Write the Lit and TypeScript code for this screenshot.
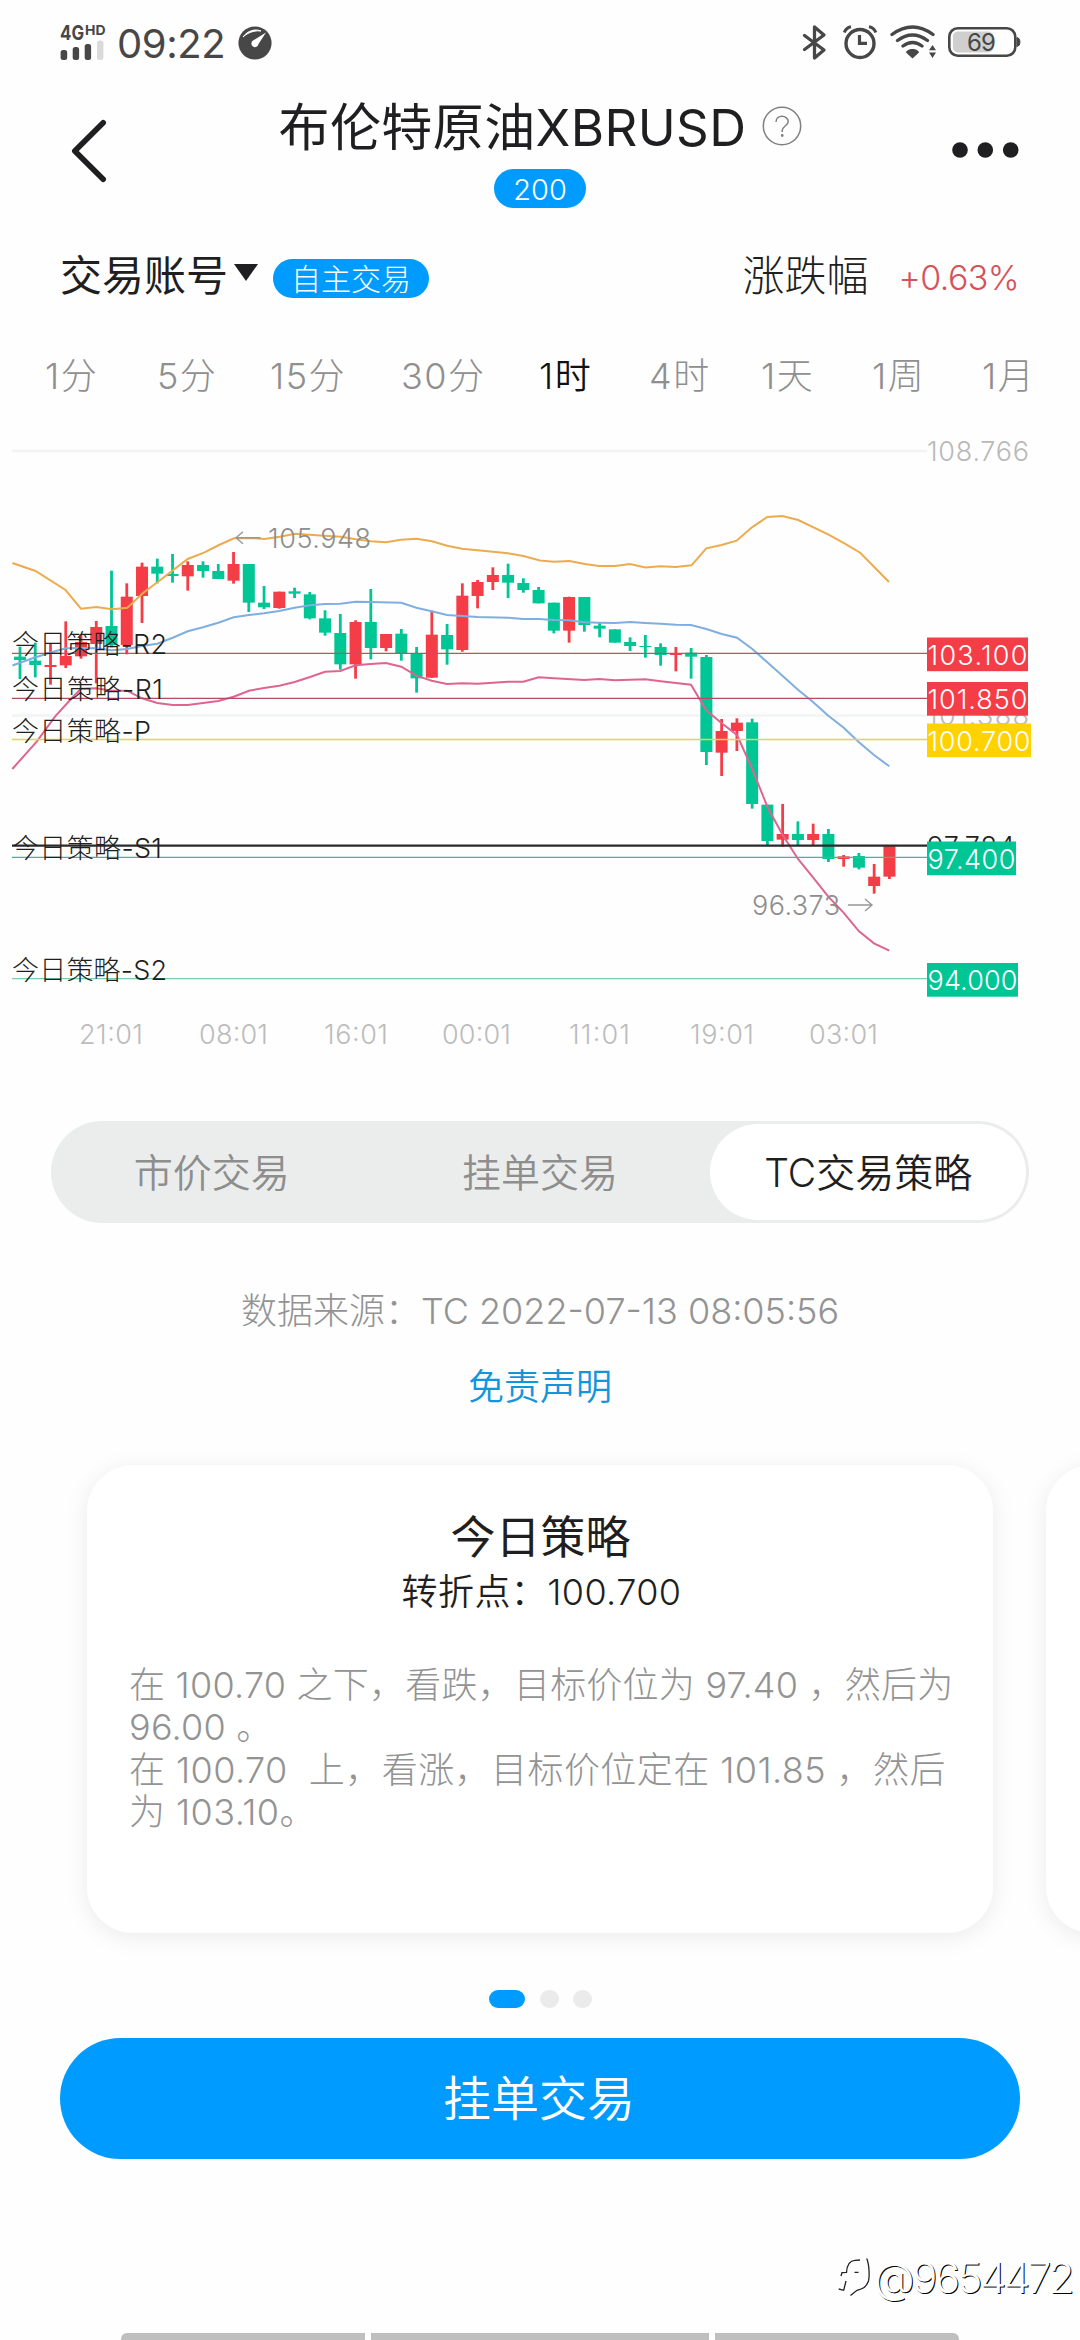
import { LitElement, html, svg, css } from "lit";
import { customElement, state } from "lit/decorators.js";
import { classMap } from "lit/directives/class-map.js";

const UP = "#f53d47";
const DOWN = "#00c696";

/* colour, wick top, wick bottom, body top, body bottom; in thirds of a pixel below y=540 */
type Candle = [string, number, number, number, number];
const candles: Candle[] = [
  [DOWN, 320, 417, 350, 360], [DOWN, 308, 412, 362, 375], [UP, 312, 434, 375, 381],
  [UP, 244, 384, 348, 376], [UP, 285, 356, 306, 349], [UP, 243, 430, 261, 312],
  [DOWN, 92, 322, 258, 316], [UP, 130, 343, 170, 315], [UP, 68, 249, 80, 168],
  [DOWN, 56, 130, 80, 101], [DOWN, 42, 128, 102, 108], [UP, 64, 152, 75, 109],
  [DOWN, 64, 113, 75, 93], [DOWN, 72, 117, 93, 117], [UP, 36, 131, 72, 122],
  [DOWN, 72, 216, 72, 188], [DOWN, 138, 207, 188, 202], [UP, 155, 206, 155, 204],
  [DOWN, 143, 174, 154, 161], [DOWN, 156, 238, 163, 235], [DOWN, 211, 287, 235, 278],
  [DOWN, 222, 389, 279, 373], [UP, 241, 416, 246, 373], [DOWN, 147, 358, 246, 324],
  [UP, 282, 334, 282, 324], [DOWN, 267, 362, 281, 339], [DOWN, 321, 458, 341, 415],
  [UP, 212, 414, 284, 413], [DOWN, 252, 374, 285, 328], [UP, 130, 335, 167, 330],
  [UP, 120, 205, 126, 168], [UP, 82, 150, 105, 126], [DOWN, 71, 174, 105, 128],
  [DOWN, 115, 158, 129, 150], [DOWN, 141, 190, 150, 190], [DOWN, 188, 280, 188, 272],
  [UP, 170, 308, 171, 272], [DOWN, 171, 275, 171, 255], [DOWN, 248, 292, 257, 266],
  [DOWN, 268, 308, 268, 308], [DOWN, 292, 333, 306, 318], [DOWN, 285, 353, 318, 321],
  [DOWN, 310, 377, 321, 345], [UP, 321, 394, 341, 345], [DOWN, 324, 416, 338, 350],
  [DOWN, 345, 675, 351, 636], [UP, 537, 708, 573, 638], [UP, 535, 633, 548, 573],
  [DOWN, 536, 806, 547, 792], [DOWN, 794, 917, 794, 903], [UP, 792, 920, 882, 899],
  [DOWN, 844, 917, 882, 900], [UP, 851, 917, 882, 900], [DOWN, 867, 966, 882, 957],
  [UP, 945, 980, 949, 957], [DOWN, 939, 988, 948, 983], [UP, 972, 1061, 1010, 1038],
  [UP, 917, 1017, 917, 1010],
];

const upperBand =
  "12.4,563 35.5,571 65.5,590 81,608.7 96.4,607 112,609.3 127.4,607.7 143,593 157.7,582 187.7,559 204,552.7 219,545 234,538.3 249,538 264.5,539 279.6,536.7 295.5,533.7 323.7,535.7 341,536.7 355.7,539.3 371,541.3 386,542.3 401,539.7 416.7,538.7 432,541.3 447,545.7 462,548.7 493,551.7 508,553.3 523.4,556 540,560.5 553.8,561.7 569.6,561 584.8,564 599,566 615,566 630,564 645.4,567.5 660.5,566.3 675.7,567 691.5,565.3 706.3,548.3 721.5,545 736.6,540.7 752,527.3 767.3,517 782.4,516 798.3,520 828.6,534.7 844.4,543.3 860.2,552.7 889,582";
const middleBand =
  "12.4,665.5 33.3,658 50,652.7 65.7,648.3 81,648 96.4,648.3 111.7,650.3 127,649 142,646 157.3,643.7 172.7,637.7 187.7,631.3 203,627.3 218.3,622.7 233.7,617.3 249,615 264,613.3 279.3,611 294.6,607.7 310,605.3 325,604 340.3,603.7 355.7,601.7 370.7,602 401.3,602.7 416.3,607.7 431.7,611.3 447,615 462.3,616 477.7,617 508,617.7 523.3,619 538.7,619 554,620 569,620.3 584.3,622.3 599.3,622.7 615,623 630.3,622 645.3,623 660.7,623.7 676,624.7 691,625 706.3,629 721.7,634 737,637.7 752,648.7 767.3,662.3 782.7,676 798,689.7 813,702 828.3,715.7 843.7,727.7 859,742.3 874,755 889.3,766.3";
const lowerBand =
  "12.3,769 36.7,741.7 55,716.7 71.7,698.3 81,688.7 96.3,688.3 111.7,690.7 127,690.7 142,698.3 157.3,703 172.7,705 187.7,705 203,703 218.3,701 233.7,696.7 249,690.7 264,688 279.3,685.7 294.7,682 310,677 325,671.7 340.3,671 355.7,665.3 370.7,664 386,663 401.3,666.7 416.3,675.7 431.7,680.7 447,684 462.3,683.3 477.7,683.7 493,682.7 508,681.7 523.3,681.7 538.7,677.3 554,678.3 584.3,680 599.3,679 615,680.3 645.3,679.3 660.7,681.3 676,683 691,684.7 706.3,710.3 721.7,723.3 737,735 752,768.3 767.3,806.7 782.7,835 798,859 813,877.3 828.3,896.7 843.3,912.3 859,931.3 874,943.3 889.3,950.7";

/* y, line colour, label, label width, price, tag top, tag width, tag fill */
const levels: [number, string, string, number, string, number, number, string][] = [
  [653.3, "#b05a5e", "今日策略-R2", 153, "103.100", 637.5, 101, UP],
  [698.3, "#b84a60", "今日策略-R1", 149, "101.850", 682, 101, UP],
  [739.5, "#dfd84a", "今日策略-P", 137, "100.700", 723.5, 104, "#ffd200"],
  [857.3, "#4fae9c", "今日策略-S1", 148, "97.400", 841.5, 89, DOWN],
  [978.7, "#7accb2", "今日策略-S2", 153, "94.000", 963, 91, DOWN],
];

const timeAxis: [string, number, number][] = [
  ["21:01", 79, 64], ["08:01", 199, 69], ["16:01", 324, 64], ["00:01", 442, 69],
  ["11:01", 569, 61], ["19:01", 690, 64], ["03:01", 809, 69],
];

@customElement("price-chart")
class PriceChart extends LitElement {
  static styles = css`
    :host { display: block; height: 650px; }
    svg { display: block; font-family: Inter, "Noto Sans CJK SC", sans-serif; font-weight: 300; font-size: 27px; }
  `;
  private y(v: number) { return 540 + v / 3; }
  render() {
    return html`<svg width="1080" height="650" viewBox="0 420 1080 650" fill="none">
      <path d="M12 451H927M12 715.5H927" stroke="#f2f3f3" stroke-width="2.4" />
      <text x="927" y="461" textLength="102" fill="#b9b9b9">108.766</text>
      <text x="927" y="725" textLength="102" fill="#b9b9b9">101.388</text>
      ${candles.map(([c, wt, wb, bt, bb], i) => {
        const x = 20 + i * 15.253;
        return svg`<rect x=${x - 1.4} y=${this.y(wt)} width="2.8" height=${(wb - wt) / 3} fill=${c} />
          <rect x=${x - 6} y=${this.y(bt)} width="12" height=${(bb - bt) / 3} fill=${c} />`;
      })}
      <polyline points=${upperBand} stroke="#ecab4e" stroke-width="2" />
      <polyline points=${middleBand} stroke="#80aee0" stroke-width="2" />
      <polyline points=${lowerBand} stroke="#de6590" stroke-width="2" />
      <path d="M260.500 537.700H236M243 531.700L236 537.700L243 543.700" stroke="#979797" stroke-width="1.400" />
      <text x="268" y="548" textLength="103" fill="#8e8e8e">105.948</text>
      <path d="M848 905H872M865 899L872 905L865 911" stroke="#979797" stroke-width="1.400" />
      <text x="752" y="915" textLength="88" fill="#8e8e8e">96.373</text>
      <path d="M12 845.700H927" stroke="#2a2a2c" stroke-width="2.200" />
      <text x="927" y="855.500" textLength="88" fill="#1f1f21">97.784</text>
      ${levels.map(([y, c, label, w, price, top, tw, fill]) => svg`
        <path d=${`M12 ${y}H927`} stroke=${c} stroke-width="1.3" />
        <text x="12" y=${y + 1} textLength=${w + 2} fill="#1f1f21">${label}</text>
        <rect x="927" y=${top} width=${tw} height="33.7" fill=${fill} />
        <text x="927.5" y=${top + 27} textLength=${tw - 1} fill="#fff">${price}</text>`)}
      ${timeAxis.map(([t, x, w]) => svg`<text x=${x} y="1044" textLength=${w} fill="#bcbcbc">${t}</text>`)}
    </svg>`;
  }
}

@customElement("app-root")
class AppRoot extends LitElement {
  static styles = css`
    :host { display: block; width: 1080px; height: 2340px; overflow: hidden; background: #fefefe;
      font-family: Inter, "Noto Sans CJK SC", sans-serif; font-weight: 300; color: #1f1f21; }
    * { box-sizing: border-box; }
    svg { display: block; flex: none; }
    .page { display: flex; flex-direction: column; width: 1080px; height: 2340px; overflow: hidden; position: relative; }
    .row { display: flex; align-items: center; white-space: pre; }
    .status { height: 86px; padding: 0 59px 0 56px; color: #474747; }
    .net { width: 54px; height: 48px; margin-right: 7px; }
    .clock { font-size: 40px; font-weight: 400; letter-spacing: -0.4px; width: 121px; line-height: 50px; padding-top: 2px; }
    .grow { flex: 1; }
    .header { height: 144px; display: grid; grid-template-columns: 200px 1fr 200px; }
    .back { padding: 33px 0 0 70px; }
    .center { display: flex; flex-direction: column; align-items: center; }
    .title { height: 80px; gap: 16px; font-size: 51px; font-weight: 400; line-height: 80px; padding-left: 1px; }
    .title span { letter-spacing: 0.4px; padding-top: 4px; }
    .more { padding: 54px 0 0 72px; }
    .pill { background: #009bff; color: #fff; border-radius: 20px; height: 39px; line-height: 41px; font-size: 30px; text-align: center; }
    .ratio { width: 92px; margin-top: 3px; font-size: 29px; }
    .account { height: 100px; padding: 0 61px 12px 60px; font-size: 42px; }
    .acct { font-weight: 400; padding-bottom: 3px; }
    .tri { margin: 0 15px 3px 6px; }
    .mode { width: 156px; margin-top: 9px; }
    .rate { padding-bottom: 3px; }
    .change { color: #d5525a; font-size: 34px; margin-left: 30px; letter-spacing: -0.6px; padding-top: 6px; }
    .tabs { height: 90px; padding: 0 0 4px 45px; font-size: 36px; color: #8f8f8f; letter-spacing: 1.5px; }
    .tab { flex: none; }
    .tab.on { color: #111; font-weight: 350; }
    .seg { margin: 51px 51px 0; height: 102px; border-radius: 51px; background: #ebedec; padding: 3px; font-size: 39px; color: #8e8e8e; font-weight: 350; }
    .seg div { height: 96px; line-height: 97px; border-radius: 48px; text-align: center; width: 316px; }
    .seg div:nth-child(2) { width: 341px; }
    .seg .on { background: #fff; color: #1f1f21; }
    .source { margin-top: 60px; text-align: center; font-size: 36px; line-height: 56px; color: #939393; white-space: pre; }
    .disclaimer { margin-top: 20px; text-align: center; font-size: 36px; line-height: 56px; color: #1296db; font-weight: 350; }
    .cards { margin-top: 50px; padding-left: 87px; gap: 53px; height: 468px; display: flex; }
    .card { flex: none; width: 906px; height: 468px; background: #fff; border-radius: 46px; box-shadow: 0 4px 24px rgba(0, 0, 0, 0.08); }
    .name { margin-top: 43px; text-align: center; font-size: 45px; line-height: 60px; font-weight: 400; padding-left: 1px; }
    .pivot { text-align: center; font-size: 36px; line-height: 48px; font-weight: 350; letter-spacing: 0.4px; padding-left: 3px; }
    .advice { margin: 48px 0 0 42px; font-size: 36px; line-height: 42.3px; color: #939393; letter-spacing: 0.23px; }
    .advice div { height: 42.3px; white-space: pre; }
    .advice div:nth-child(n + 3) { letter-spacing: 0.43px; }
    .dots { justify-content: center; gap: 14px; margin-top: 57px; height: 18px; }
    .dot { width: 19px; height: 18px; border-radius: 9px; background: #ebebeb; }
    .dot.on { width: 36px; background: #009bff; margin-right: 1px; }
    .order { margin: 30px 60px 0; height: 121px; line-height: 121px; border-radius: 61px; background: #009bff; color: #fff; font-size: 48px; text-align: center; padding-right: 2px; font-weight: 350; }
    .mark { position: absolute; right: 8px; top: 2248px; color: #fff; font-size: 42px; line-height: 60px; font-weight: 300; letter-spacing: -2.5px; text-shadow: 1px 1px 0.6px #000; gap: 4px; }
    .nav { margin: 174px 0 0 121px; gap: 6px; height: 7px; }
    .nav i { display: block; height: 14px; align-self: flex-start; background: #bfbfbf; width: 244px; border-radius: 6px 0 0 6px; }
    .nav i:nth-child(2) { width: 338px; border-radius: 0; }
    .nav i:nth-child(3) { border-radius: 0 6px 6px 0; }
  `;

  @state() private period = "1时";
  private periods: [string, number][] = [
    ["1分", 112], ["5分", 113], ["15分", 131], ["30分", 138], ["1时", 110],
    ["4时", 112], ["1天", 111], ["1周", 110], ["1月", 90],
  ];

  render() {
    return html`<div class="page">
      <div class="row status">
        <svg class="net" viewBox="56 16 54 48" fill="#474747">
          <text x="60" y="37.200" font-size="20.500" font-weight="700" textLength="24" lengthAdjust="spacingAndGlyphs">4G</text>
          <text x="85" y="32" font-size="13.500" font-weight="700" textLength="20.500" lengthAdjust="spacingAndGlyphs">HD</text>
          <rect x="60.600" y="47" width="6.600" height="10" rx="2.500" /><rect x="72.700" y="44" width="6.400" height="13" rx="2.500" />
          <rect x="84.700" y="41" width="6.400" height="16" rx="2.500" /><rect x="97" y="37.500" width="6.400" height="19.500" rx="2.500" fill="#dadada" />
        </svg>
        <span class="clock">09:22</span>
        <svg width="34" height="34" viewBox="237.500 25.500 34 34">
          <circle cx="254.500" cy="42.500" r="16.600" fill="#474747" />
          <path d="M242.500 36.500C247 30 255 28 260.500 30.500C254.500 29.800 248 31.500 242.500 36.500Z" fill="#fff" stroke="#fff" stroke-width="1" />
          <path d="M265.500 32L258 43.500A3.600 3.600 0 1 1 252.500 40Z" fill="#fff" />
        </svg>
        <span class="grow"></span>
        <svg width="220" height="38" viewBox="801 24 220 38" fill="none" stroke="#474747">
          <path d="M804.500 35.500L824 50L814.500 58V27L824 35L804.500 49.500" stroke-width="3.300" stroke-linejoin="round" stroke-linecap="round" />
          <circle cx="860" cy="43.500" r="14" stroke-width="3.400" />
          <path d="M859.500 35V43.300H867" stroke-width="3.200" />
          <path d="M844.300 32.500A9 9 0 0 1 851 26.700M869 26.700A9 9 0 0 1 875.800 32.500" stroke-width="3" />
          <path d="M892 34.500Q912.500 19.500 933 34.500M897.500 40.500Q912.500 29.500 927.500 40.500M903 46Q912.500 39 922 46" stroke-width="3.300" stroke-linecap="round" />
          <path d="M912.500 49C908 49 906 51.500 906 52.500L912.500 58.500L919 52.500C919 51.500 917 49 912.500 49Z" fill="#474747" stroke="none" />
          <path d="M929 50.300L932.500 45L936 50.300ZM929 52.500L932.500 58L936 52.500Z" fill="#474747" stroke="none" />
          <rect x="953" y="31.500" width="40" height="21" rx="5" fill="#cfcfcf" stroke="none" />
          <rect x="949.300" y="28.300" width="66" height="27.400" rx="8.500" stroke-width="2.600" />
          <path d="M1017 37.500Q1020 38 1020 42T1017 46.500Z" fill="#474747" stroke-width="1" />
          <text x="967" y="51" font-size="24" font-weight="400" textLength="29" fill="#474747" stroke="none">69</text>
        </svg>
      </div>

      <div class="header">
        <div class="back"><svg width="40" height="66" viewBox="70 118 40 66" fill="none" stroke="#1f1f21" stroke-width="5.600" stroke-linecap="round" stroke-linejoin="round"><path d="M103.200 121.800L74.800 150L103.200 178.200" /></svg></div>
        <div class="center">
          <div class="row title"><span>布伦特原油XBRUSD</span>
            <svg width="40" height="40" viewBox="0 0 40 40" fill="none" stroke="#808080" stroke-width="1.500">
              <circle cx="20" cy="20" r="18.700" /><path d="M14 16C14 12.500 16.500 10.300 20 10.300S26.200 12.600 26.200 15.600C26.200 20 20.200 20 20.200 24.500V26" />
              <circle cx="20.200" cy="29.500" r="0.700" fill="#808080" />
            </svg>
          </div>
          <div class="pill ratio">200</div>
        </div>
        <div class="more"><svg width="68" height="18" viewBox="0 0 68 18" fill="#1f1f21"><circle cx="8" cy="10" r="7.800" /><circle cx="33.300" cy="10" r="7.800" /><circle cx="58.700" cy="10" r="7.800" /></svg></div>
      </div>

      <div class="row account">
        <span class="acct">交易账号</span>
        <svg class="tri" width="24" height="17" viewBox="0 0 24 17"><path d="M0 0H24L12 17Z" fill="#1f1f21" /></svg>
        <span class="pill mode">自主交易</span>
        <span class="grow"></span>
        <span class="rate">涨跌幅</span><span class="change">+0.63%</span>
      </div>

      <div class="row tabs">
        ${this.periods.map(([p, w]) => html`<span class=${classMap({ tab: true, on: p === this.period })}
          style="width:${w}px" @click=${() => (this.period = p)}>${p}</span>`)}
      </div>

      <price-chart></price-chart>

      <div class="row seg"><div>市价交易</div><div>挂单交易</div><div class="on">TC交易策略</div></div>
      <div class="source">数据来源：TC 2022-07-13 08:05:56</div>
      <div class="disclaimer">免责声明</div>

      <div class="cards">
        <div class="card">
          <div class="name">今日策略</div>
          <div class="pivot">转折点：100.700</div>
          <div class="advice">
            ${["在 100.70 之下，看跌，目标价位为 97.40 ，然后为", "96.00 。", "在 100.70  上，看涨，目标价位定在 101.85 ，然后", "为 103.10。"].map((l) => html`<div>${l}</div>`)}
          </div>
        </div>
        <div class="card"></div>
      </div>

      <div class="row dots"><span class="dot on"></span><span class="dot"></span><span class="dot"></span></div>
      <div class="order">挂单交易</div>
      <div class="row nav"><i></i><i></i><i></i></div>

      <div class="row mark">
        <svg width="34" height="42" viewBox="0 0 34 42" fill="none" stroke="#222" stroke-width="1.300">
          <path d="M5 19L6 15.700L10.500 15.300C11 8 14 3.500 19 3.300L24 3M10 24L7.700 33.300L2.700 32M18.500 15.300H22.500M30.700 1.500C33.500 8 33.500 20 32.500 24C30 31 26 32 21 33.300L14.500 38.500" />
        </svg><span>@9654472</span>
      </div>
    </div>`;
  }
}
